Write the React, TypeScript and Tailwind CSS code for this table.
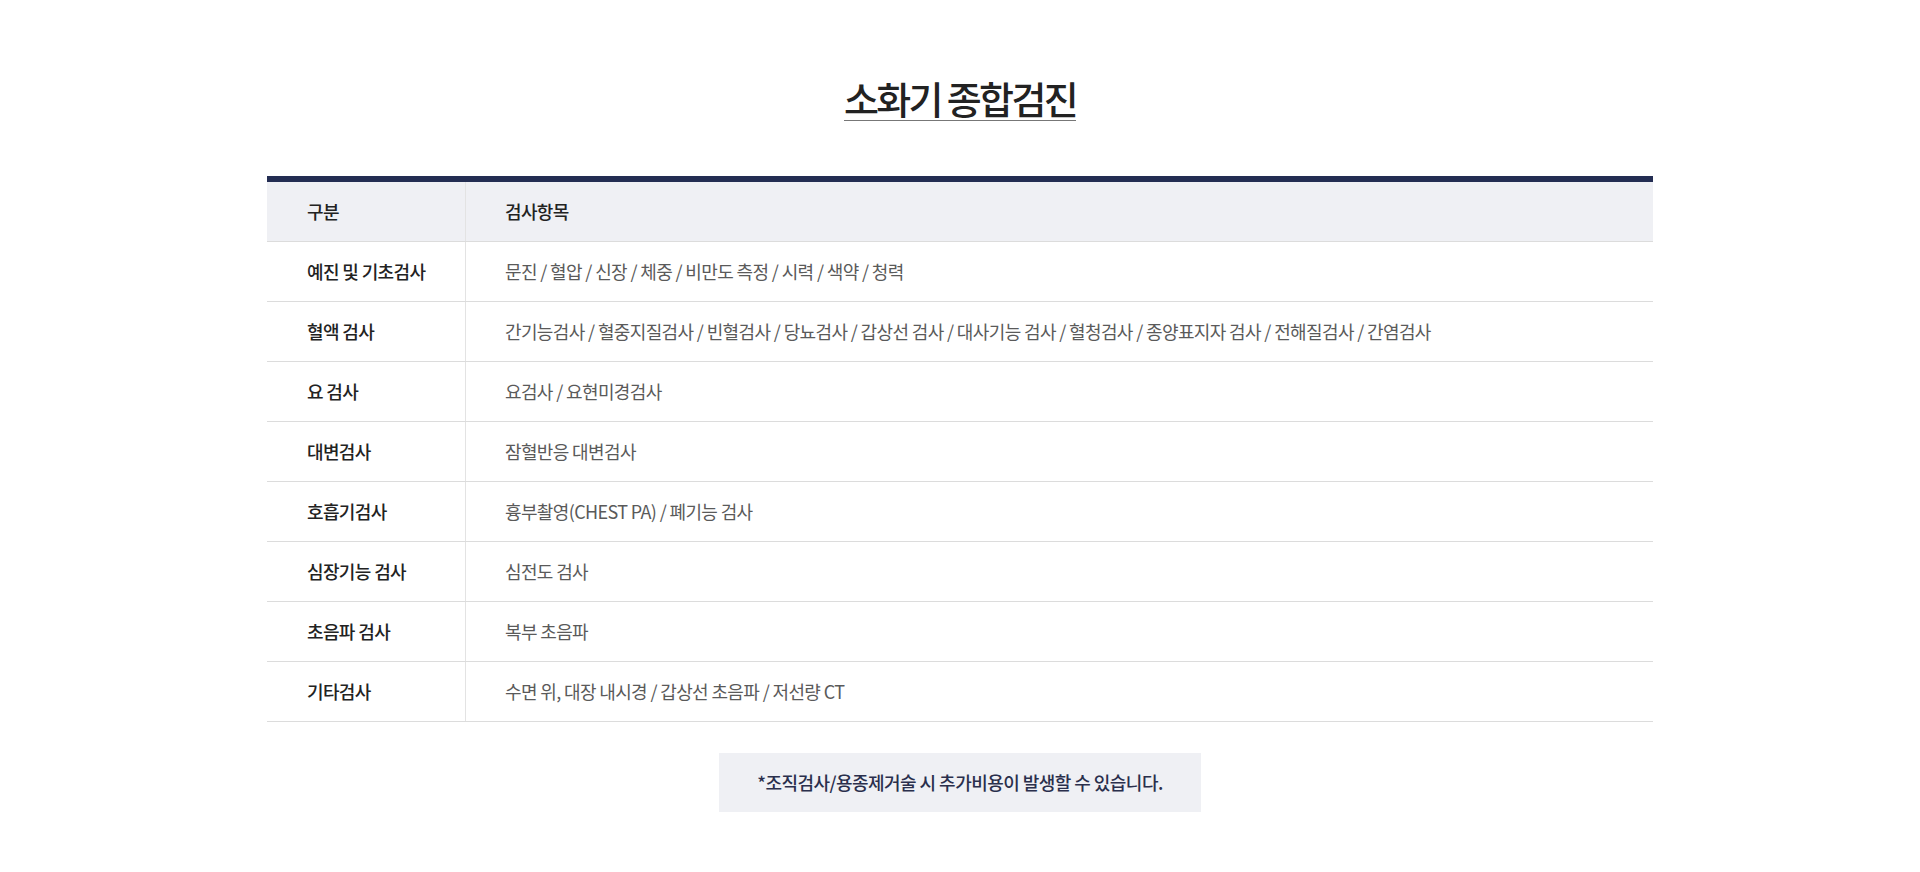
import React from 'react';

const rows: { label: string; items: string }[] = [
  { label: '예진 및 기초검사', items: '문진 / 혈압 / 신장 / 체중 / 비만도 측정 / 시력 / 색약 / 청력' },
  {
    label: '혈액 검사',
    items:
      '간기능검사 / 혈중지질검사 / 빈혈검사 / 당뇨검사 / 갑상선 검사 / 대사기능 검사 / 혈청검사 / 종양표지자 검사 / 전해질검사 / 간염검사',
  },
  { label: '요 검사', items: '요검사 / 요현미경검사' },
  { label: '대변검사', items: '잠혈반응 대변검사' },
  { label: '호흡기검사', items: '흉부촬영(CHEST PA) / 폐기능 검사' },
  { label: '심장기능 검사', items: '심전도 검사' },
  { label: '초음파 검사', items: '복부 초음파' },
  { label: '기타검사', items: '수면 위, 대장 내시경 / 갑상선 초음파 / 저선량 CT' },
];

const ExamRow: React.FC<{ label: string; items: string; head?: boolean }> = ({ label, items, head }) => (
  <div className={`flex h-[60px] border-b border-[#dcdcdc] ${head ? 'bg-[#eff0f4]' : 'bg-white'}`}>
    <div className="w-[199px] shrink-0 flex items-center pl-[40px] border-r border-[#e3e3e3] text-[18px] font-medium text-[#222] tracking-[-0.035em]">
      {label}
    </div>
    <div
      className={`flex-1 flex items-center pl-[39px] text-[18px] tracking-[-0.035em] ${
        head ? 'font-medium text-[#222]' : 'font-normal text-[#5a5a5a]'
      }`}
    >
      {items}
    </div>
  </div>
);

export default function App() {
  return (
    <div className="min-h-[872px] bg-white font-['Noto_Sans_CJK_KR','Noto_Sans',sans-serif]">
      <div className="flex flex-col items-center pt-[75px] pb-[60px]">
        <h2 className="text-[38px] leading-[46px] font-medium text-[#222] tracking-[-0.07em] underline decoration-[#777] decoration-1 underline-offset-[6px]">
          소화기 종합검진
        </h2>

        <div className="w-[1386px] mt-[55px] border-t-[6px] border-[#232d52]">
          <ExamRow label="구분" items="검사항목" head />
          {rows.map((r) => (
            <ExamRow key={r.label} label={r.label} items={r.items} />
          ))}
        </div>

        <div className="mt-[31px] w-[482px] h-[59px] bg-[#eff0f4] flex items-center justify-center text-[18px] font-medium text-[#2a2f4c] tracking-[-0.03em]">
          *조직검사/용종제거술 시 추가비용이 발생할 수 있습니다.
        </div>
      </div>
    </div>
  );
}
